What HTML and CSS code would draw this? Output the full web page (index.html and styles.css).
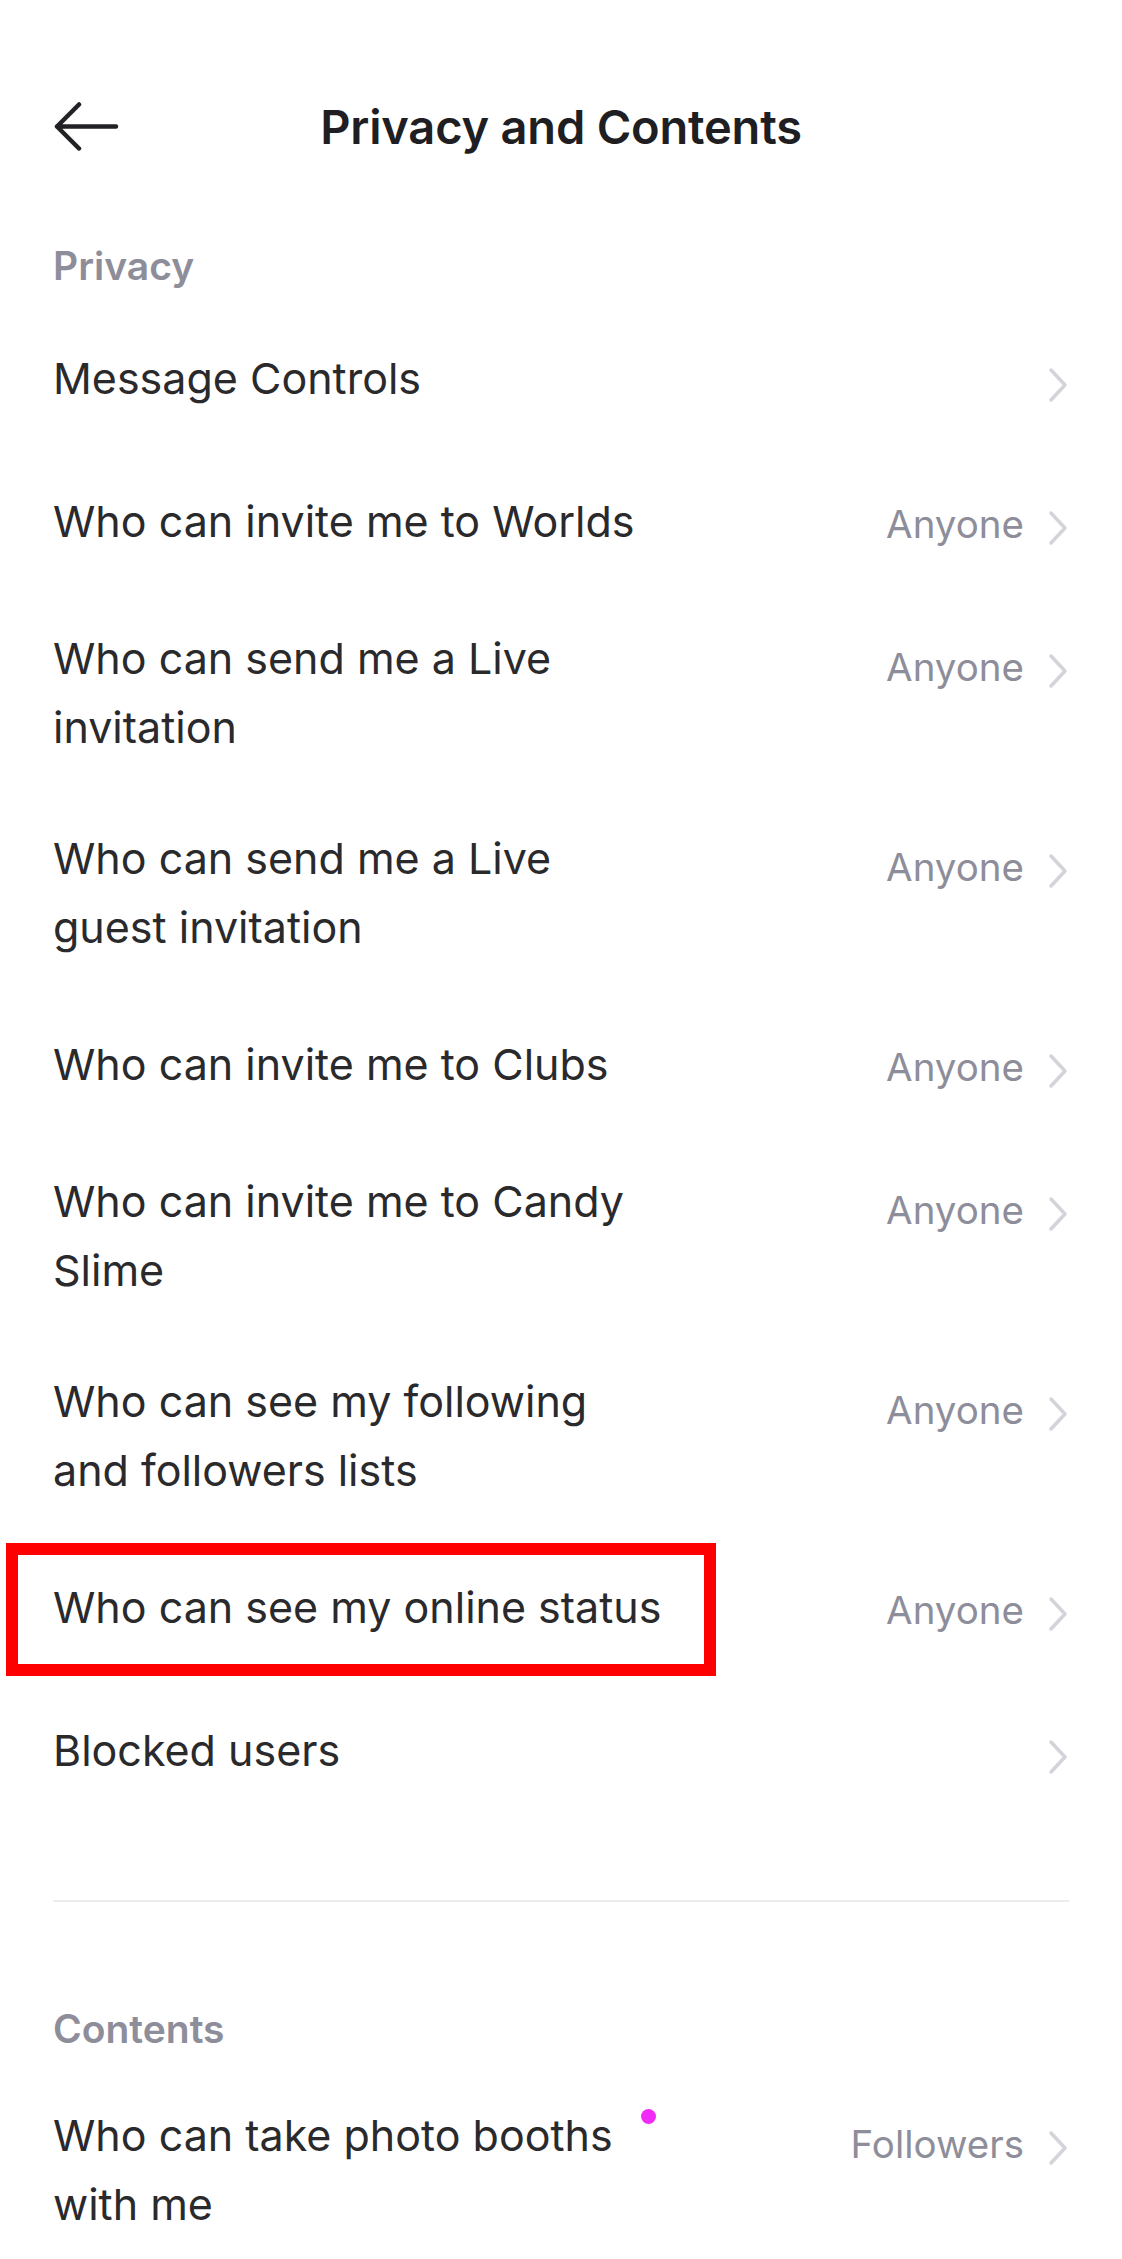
FILE: index.html
```html
<!DOCTYPE html>
<html lang="en">
<head>
<meta charset="utf-8">
<title>Privacy and Contents</title>
<link rel="stylesheet" href="styles.css">
</head>
<body>
<div class="screen">
  <header class="topbar">
    <div class="topbar-left">
      <svg class="back-icon" width="66" height="50" viewBox="0 0 66 50" aria-label="Back">
        <path d="M4 24.5 H63 M26 2.5 L4 24.5 L26 46.5" fill="none" stroke="#222226" stroke-width="4.5" stroke-linecap="round" stroke-linejoin="round"/>
      </svg>
    </div>
    <h1 class="title">Privacy and Contents</h1>
    <div class="topbar-right"></div>
  </header>

  <section class="section">
    <h2 class="section-label">Privacy</h2>
    <ul class="rows">
      <li class="row">
        <span class="row-label">Message Controls</span>
        <span class="row-value"><svg class="chev" width="20" height="36" viewBox="0 0 20 36"><path d="M3 3 L17 18 L3 33" fill="none" stroke="#d3d3d9" stroke-width="3.5" stroke-linecap="round" stroke-linejoin="round"/></svg></span>
      </li>
      <li class="row">
        <span class="row-label">Who can invite me to Worlds</span>
        <span class="row-value"><span class="value-text">Anyone</span><svg class="chev" width="20" height="36" viewBox="0 0 20 36"><path d="M3 3 L17 18 L3 33" fill="none" stroke="#d3d3d9" stroke-width="3.5" stroke-linecap="round" stroke-linejoin="round"/></svg></span>
      </li>
      <li class="row">
        <span class="row-label">Who can send me a Live invitation</span>
        <span class="row-value"><span class="value-text">Anyone</span><svg class="chev" width="20" height="36" viewBox="0 0 20 36"><path d="M3 3 L17 18 L3 33" fill="none" stroke="#d3d3d9" stroke-width="3.5" stroke-linecap="round" stroke-linejoin="round"/></svg></span>
      </li>
      <li class="row">
        <span class="row-label">Who can send me a Live guest invitation</span>
        <span class="row-value"><span class="value-text">Anyone</span><svg class="chev" width="20" height="36" viewBox="0 0 20 36"><path d="M3 3 L17 18 L3 33" fill="none" stroke="#d3d3d9" stroke-width="3.5" stroke-linecap="round" stroke-linejoin="round"/></svg></span>
      </li>
      <li class="row">
        <span class="row-label">Who can invite me to Clubs</span>
        <span class="row-value"><span class="value-text">Anyone</span><svg class="chev" width="20" height="36" viewBox="0 0 20 36"><path d="M3 3 L17 18 L3 33" fill="none" stroke="#d3d3d9" stroke-width="3.5" stroke-linecap="round" stroke-linejoin="round"/></svg></span>
      </li>
      <li class="row">
        <span class="row-label">Who can invite me to Candy Slime</span>
        <span class="row-value"><span class="value-text">Anyone</span><svg class="chev" width="20" height="36" viewBox="0 0 20 36"><path d="M3 3 L17 18 L3 33" fill="none" stroke="#d3d3d9" stroke-width="3.5" stroke-linecap="round" stroke-linejoin="round"/></svg></span>
      </li>
      <li class="row">
        <span class="row-label">Who can see my following and followers lists</span>
        <span class="row-value"><span class="value-text">Anyone</span><svg class="chev" width="20" height="36" viewBox="0 0 20 36"><path d="M3 3 L17 18 L3 33" fill="none" stroke="#d3d3d9" stroke-width="3.5" stroke-linecap="round" stroke-linejoin="round"/></svg></span>
      </li>
      <li class="row row-highlighted">
        <span class="highlight-box"></span>
        <span class="row-label">Who can see my online status</span>
        <span class="row-value"><span class="value-text">Anyone</span><svg class="chev" width="20" height="36" viewBox="0 0 20 36"><path d="M3 3 L17 18 L3 33" fill="none" stroke="#d3d3d9" stroke-width="3.5" stroke-linecap="round" stroke-linejoin="round"/></svg></span>
      </li>
      <li class="row">
        <span class="row-label">Blocked users</span>
        <span class="row-value"><svg class="chev" width="20" height="36" viewBox="0 0 20 36"><path d="M3 3 L17 18 L3 33" fill="none" stroke="#d3d3d9" stroke-width="3.5" stroke-linecap="round" stroke-linejoin="round"/></svg></span>
      </li>
    </ul>
  </section>

  <hr class="divider">

  <section class="section section-contents">
    <h2 class="section-label">Contents</h2>
    <ul class="rows">
      <li class="row">
        <span class="row-label">Who can take photo booths<span class="new-dot"></span> with me</span>
        <span class="row-value"><span class="value-text">Followers</span><svg class="chev" width="20" height="36" viewBox="0 0 20 36"><path d="M3 3 L17 18 L3 33" fill="none" stroke="#d3d3d9" stroke-width="3.5" stroke-linecap="round" stroke-linejoin="round"/></svg></span>
      </li>
    </ul>
  </section>
</div>
</body>
</html>
```

FILE: styles.css
```css
* {
  box-sizing: border-box;
}

html, body {
  margin: 0;
  padding: 0;
  background: #ffffff;
}

body {
  font-family: Inter, "Noto Sans", "Liberation Sans", sans-serif;
  color: #2a2a2c;
}

.screen {
  width: 1122px;
  min-height: 2259px;
  overflow: hidden;
}

.topbar {
  display: grid;
  grid-template-columns: 1fr auto 1fr;
  align-items: center;
  height: 80px;
  margin-top: 87px;
  padding: 0 53px;
}

.topbar-left {
  display: flex;
  align-items: center;
}

.back-icon {
  display: block;
}

.title {
  margin: 0;
  font-size: 47px;
  font-weight: 600;
  color: #1f1f23;
  letter-spacing: -0.2px;
  line-height: 80px;
}

.section {
  padding: 0 55px 0 53px;
}

.section-label {
  margin: 74px 0 16px;
  height: 50px;
  font-size: 39px;
  line-height: 50px;
  font-weight: 600;
  color: #8e8d9a;
}

.rows {
  list-style: none;
  margin: 0;
  padding: 0;
}

.row {
  position: relative;
  display: flex;
  align-items: center;
  justify-content: space-between;
  min-height: 143px;
  padding: 31px 0;
}

.row-label {
  max-width: 613px;
  font-size: 43px;
  line-height: 69px;
  color: #2a2a2c;
}

.row-value {
  align-self: flex-start;
  display: flex;
  align-items: center;
  height: 69px;
  margin-top: 8px;
  margin-left: auto;
}

.value-text {
  font-size: 38.5px;
  color: #8e8d9a;
  margin-right: 24px;
}

.chev {
  display: block;
  margin-top: 8px;
  margin-right: -1px;
}

.highlight-box {
  position: absolute;
  top: 7px;
  left: -47px;
  width: 710px;
  height: 133px;
  border: 12px solid #ff0000;
  pointer-events: none;
}

.divider {
  margin: 78px 53px 0 53px;
  border: 0;
  height: 2px;
  background: #ececef;
}

.section-contents .section-label {
  margin-top: 102px;
}

.new-dot {
  display: inline-block;
  width: 15px;
  height: 15px;
  margin-left: 28px;
  margin-top: 8px;
  vertical-align: top;
  border-radius: 50%;
  background: #f02cf6;
}
```
